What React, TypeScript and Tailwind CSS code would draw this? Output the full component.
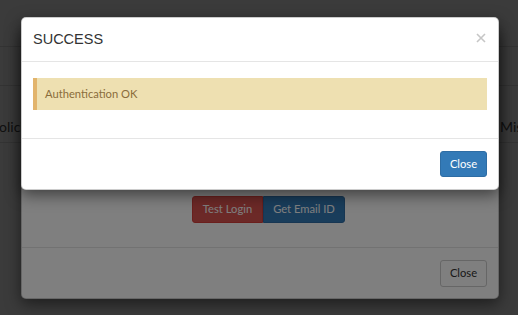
import React from 'react';

const App: React.FC = () => {
    return (
        <div className="relative h-[315px] w-[518px] overflow-hidden bg-[#ececec] font-['Lato',sans-serif]">
            {/* page behind the dialogs */}
            <div className="flex flex-col text-[14px] text-[#444]">
                <div className="h-[47px] border-b border-[#cfcfcf]"></div>
                <div className="h-[39px] border-b border-[#cfcfcf]"></div>
                <div className="flex h-[57px] items-end border-b border-[#cfcfcf] pb-[6px] leading-[18px]">
                    <span className="-ml-[9px] w-[509px] shrink-0">Policies</span>
                    <span className="whitespace-nowrap">Miscellaneous</span>
                </div>
            </div>

            <div className="absolute inset-0 bg-black/50"></div>

            {/* first dialog */}
            <div className="absolute left-[21px] top-[30px] w-[478px] rounded-[5px] border border-black/20 bg-white shadow-[0_5px_15px_rgba(0,0,0,0.5)]">
                <div className="h-[44px] border-b border-[#e5e5e5]"></div>
                <div className="flex justify-center pb-[24px] pl-[17px] pt-[121px] text-[11.2px]">
                    <button className="h-[27px] w-[71px] rounded-l-[3px] border border-[#d43f3a] bg-[#d9534f] text-white">
                        Test Login
                    </button>
                    <button className="h-[27px] w-[82px] rounded-r-[3px] border border-[#2e6da4] bg-[#337ab7] text-white">
                        Get Email ID
                    </button>
                </div>
                <div className="flex justify-end border-t border-[#e5e5e5] px-[11px] pb-[11px] pt-[12px]">
                    <button className="h-[27px] w-[47px] rounded-[3px] border border-[#ccc] bg-white text-[11.2px] text-[#333]">
                        Close
                    </button>
                </div>
            </div>

            <div className="absolute inset-0 bg-black/50"></div>

            {/* success dialog */}
            <div className="absolute left-[21px] top-[17px] w-[478px] rounded-[5px] border border-black/20 bg-white shadow-[0_5px_15px_rgba(0,0,0,0.5)]">
                <div className="flex h-[44px] items-center justify-between border-b border-[#e5e5e5] px-[11px]">
                    <h4 className="font-['Liberation_Sans',Arial,sans-serif] text-[14.5px] text-[#333]">SUCCESS</h4>
                    <svg width="10" height="10" viewBox="0 0 10 10" className="mb-[3px] mr-[1px]">
                        <path d="M1 1L9 9M9 1L1 9" stroke="#c6c6c6" strokeWidth="1.6" />
                    </svg>
                </div>
                <div className="px-[11px] pb-[28px] pt-[16px]">
                    <div className="flex h-[32px] items-center border-l-4 border-[#e2b46c] bg-[#eee0b1] pl-2 text-[11.2px] text-[#8a6d3b]">
                        Authentication OK
                    </div>
                </div>
                <div className="flex justify-end border-t border-[#e5e5e5] px-[11px] pb-[12px] pt-[12px]">
                    <button className="h-[26px] w-[47px] rounded-[3px] border border-[#2e6da4] bg-[#337ab7] text-[11.2px] text-white">
                        Close
                    </button>
                </div>
            </div>
        </div>
    );
};

export default App;
